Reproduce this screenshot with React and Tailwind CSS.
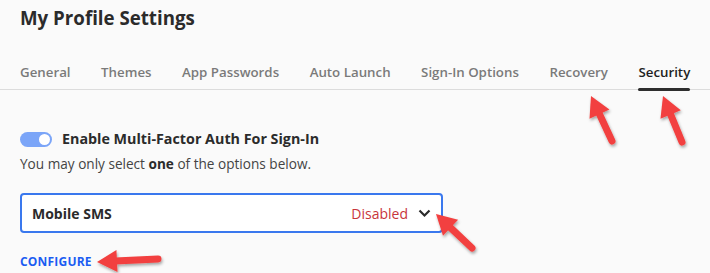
import React from 'react';

const tabs = ['General', 'Themes', 'App Passwords', 'Auto Launch', 'Sign-In Options', 'Recovery', 'Security'];

function Arrow({ x1, y1, x2, y2 }) {
  // arrow from tail (x1,y1) to tip (x2,y2)
  const dx = x2 - x1;
  const dy = y2 - y1;
  const len = Math.sqrt(dx * dx + dy * dy);
  const ux = dx / len;
  const uy = dy / len;
  const hl = 20;
  const hw = 11;
  const bx = x2 - ux * hl;
  const by = y2 - uy * hl;
  const head = `${x2},${y2} ${bx - uy * hw},${by + ux * hw} ${bx + uy * hw},${by - ux * hw}`;
  return (
    <g>
      <line x1={x1} y1={y1} x2={bx + ux * 2} y2={by + uy * 2} stroke="#f2413f" strokeWidth="7" strokeLinecap="round" />
      <polygon points={head} fill="#f2413f" />
    </g>
  );
}

export default function App() {
  return (
    <div className="relative w-[710px] h-[273px] overflow-hidden bg-[#fafafa] font-['Open_Sans',sans-serif] text-[#333]">
      <div className="px-5 pt-[5px]">
        <h1 className="text-[18.7px] font-bold leading-[26px] text-[#2b2b2b]">My Profile Settings</h1>
      </div>

      <div className="mt-[28px] border-b border-[#dcdcdc]">
        <div className="flex gap-[30.5px] px-5 whitespace-nowrap">
          {tabs.map((t) => (
            <div key={t} className="relative shrink-0 pb-[6px]">
              <span className={`text-[13.3px] font-semibold leading-[20px] ${t === 'Security' ? 'text-[#222]' : 'text-[#7a7a7a]'}`}>{t}</span>
              {t === 'Security' && (
                <div className="absolute left-0 right-0 bottom-[-2px] h-[3px] rounded-full bg-[#2e2e2e]" />
              )}
            </div>
          ))}
        </div>
      </div>

      <div className="px-5 pt-[39px]">
        <div className="flex items-center gap-[10px] whitespace-nowrap">
          <div className="flex h-[15px] w-[32px] shrink-0 items-center justify-end rounded-full bg-[#7ba5f8] pr-[2px]">
            <div className="h-[11px] w-[11px] rounded-full bg-white" />
          </div>
          <span className="text-[14.3px] font-bold leading-[20px] text-[#2b2b2b]">Enable Multi-Factor Auth For Sign-In</span>
        </div>
        <p className="mt-[5px] whitespace-nowrap text-[13.6px] leading-[20px] text-[#444]">
          You may only select <span className="font-bold text-[#2b2b2b]">one</span> of the options below.
        </p>

        <div className="mt-[19px] flex h-[40px] w-[423px] items-center whitespace-nowrap rounded-[4px] border-2 border-[#3a78ee] bg-white pl-[10px] pr-[10px]">
          <span className="flex-1 text-[14px] font-bold text-[#2b2b2b]">Mobile SMS</span>
          <span className="text-[14px] text-[#c8353b]">Disabled</span>
          <svg className="ml-[10px]" width="13" height="9" viewBox="0 0 13 9" fill="none">
            <path d="M1.5 1.5 L6.5 6.5 L11.5 1.5" stroke="#2b2b2b" strokeWidth="2.2" />
          </svg>
        </div>

        <div className="mt-[20px] text-[12px] font-bold leading-[18px] tracking-[0.2px] text-[#1a5cf2]">CONFIGURE</div>
      </div>

      <svg className="pointer-events-none absolute inset-0" width="710" height="273">
        <defs>
          <filter id="sh" x="-20%" y="-20%" width="140%" height="140%">
            <feDropShadow dx="1" dy="2" stdDeviation="1.5" floodColor="#000" floodOpacity="0.35" />
          </filter>
        </defs>
        <g filter="url(#sh)">
          <Arrow x1={612} y1={141} x2={591} y2={96} />
          <Arrow x1={682} y1={142} x2={663} y2={96} />
          <Arrow x1={472} y1={248} x2={436} y2={214} />
          <Arrow x1={158} y1={259} x2={97} y2={262} />
        </g>
      </svg>
    </div>
  );
}
